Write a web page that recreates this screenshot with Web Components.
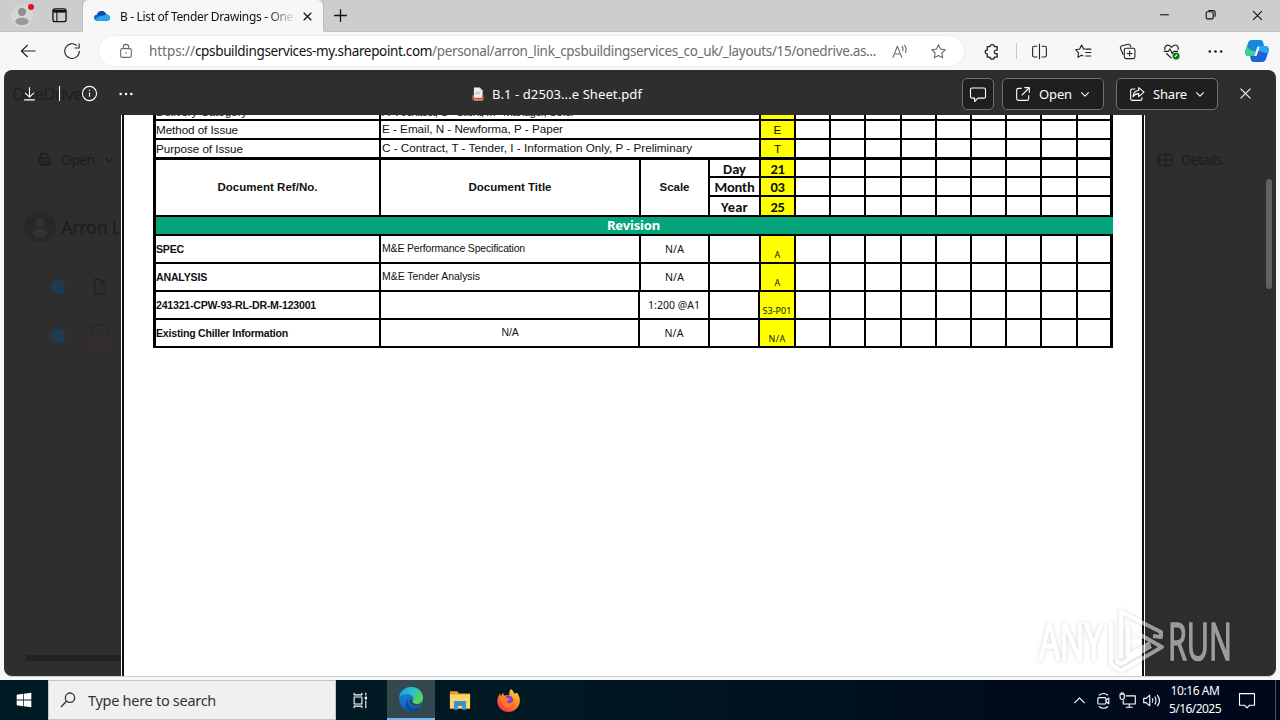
<!DOCTYPE html>
<html lang="en">
<head>
<meta charset="utf-8">
<title>B - List of Tender Drawings - OneDrive</title>
<style>
  body { margin: 0; width: 1280px; height: 720px; overflow: hidden; font-family: "Noto Sans", "Open Sans", sans-serif; }
</style>
</head>
<body>
<desktop-screen>
  <tab-strip></tab-strip>
  <address-bar></address-bar>
  <pdf-viewer><issue-sheet></issue-sheet></pdf-viewer>
  <task-bar></task-bar>
</desktop-screen>

<script>
// single line label, letter-spacing is adjusted so the text takes `w` pixels
class FitText extends HTMLElement {
  connectedCallback() {
    const w = parseFloat(this.getAttribute('w'));
    this.attachShadow({ mode: 'open' });
    this.shadowRoot.innerHTML = `
      <style>
        :host { display: block; flex: none; white-space: nowrap; }
        span { display: inline-block; vertical-align: top; }
      </style>
      <span><slot></slot></span>
    `;
    const span = this.shadowRoot.querySelector('span');
    const n = this.textContent.length;
    const natural = span.getBoundingClientRect().width;
    if (w && natural) {
      span.style.letterSpacing = ((w - natural) / n) + 'px';
      this.style.width = w + 'px';
    }
  }
}

const ICONS = {
  person: '<circle cx="12" cy="7" r="5" fill="#8f8f8f" stroke="none"/><ellipse cx="12" cy="18.5" rx="8" ry="4.5" fill="#999" stroke="none"/>',
  workspaces: '<rect x="4.5" y="4.5" width="15" height="14.500" rx="2.500" stroke-width="1.5"/><path d="M5 7.200H19" stroke-width="3"/><path d="M9 8V19"/>',
  onedrive: '<path d="M5 19C2 19 0 16.800 0 14.300S2 10 4.500 9.800C6 6 8.500 4.500 11.500 4.500c3.200 0 5.800 2 6.600 5C21.500 9.500 24 11.800 24 14.500S22 19 19.500 19z" fill="#0a66c2" stroke="none"/><path d="M4 18.800c-1.500-2 0-5 3-5.500L18 9.500c3.500 0 6 2.300 6 5S22 19 19.500 19z" fill="#28a8ea" stroke="none"/><path d="M4.500 9.800C6 6 8.500 4.500 11.500 4.500c3.200 0 5.800 2 6.600 5L12 12z" fill="#0b4fa3" stroke="none"/>',
  close: '<path d="M5 5l14 14M19 5L5 19"/>',
  plus: '<path d="M12 3v18M3 12h18"/>',
  minus: '<path d="M4 12.500h16"/>',
  restore: '<rect x="4" y="7" width="13" height="13" rx="2.500"/><path d="M8 4.500h8.500a4 4 0 0 1 4 4V16"/>',
  back: '<path d="M22 12H3M11.500 4L3.200 12l8.300 8"/>',
  reload: '<path d="M18.500 4.800A9.800 9.800 0 1 0 21.800 12M21.500 2v6h-6"/>',
  lock: '<rect x="4" y="8.500" width="16" height="13" rx="2.500"/><path d="M8 8.500V6a4 4 0 0 1 8 0v2.500"/><circle cx="12" cy="15" r="1.200" fill="currentColor" stroke="none"/>',
  readaloud: '<path d="M2.500 21L9 4.500 15.500 21M5 15.500h8M15 4.500c2 1.500 2.500 4 1.500 7M18.500 2.500c3 3 3.500 7.500 1.500 11.500"/>',
  star: '<path d="M12 2.500l2.900 6.100 6.600.9-4.800 4.600 1.200 6.700L12 17.600l-5.900 3.200 1.200-6.700L2.500 9.500l6.600-.9z"/>',
  puzzle: '<path d="M6 5h4a3 2.800 0 0 1 6 0h4v5h-1.500a2.600 2.600 0 0 0 0 5.200H20V20h-4a3 2.800 0 0 1-6 0H6v-4.500a2.800 2.800 0 1 1 0-5.600z"/>',
  split: '<path d="M9 4.500H4.500A2.200 2.200 0 0 0 2.300 6.700V17.500a2.200 2.200 0 0 0 2.200 2.200H9M15 4.500h4.500a2.200 2.200 0 0 1 2.200 2.200V17.500a2.200 2.200 0 0 1-2.200 2.200H15M12 1v22"/>',
  favorites: '<path d="M15 8.700l-2.800-.4L9.300 2.800 6.600 8.500.8 9.500 5 13.800l-1 6.300 5.200-2.900 2.500 1.300M15.500 8.700H23M14.500 13.500H23M14.500 18.300H23"/>',
  collections: '<path d="M6 16.500L2 7.500a2.500 2.500 0 0 1 1.500-3.200L13 1.800a2.500 2.500 0 0 1 3 1.700L17 6"/><rect x="7.500" y="7.500" width="15" height="14.500" rx="2.500"/><path d="M15 10.800v8M11 14.800h8"/>',
  health: '<path d="M3 10C1 5 5.500 1.800 9 3.500l3 2.600 3-2.600c4-2 8 1.500 6 6.500M1 11.800h6.500l2.500-3.500 3 7 2-3.500h6M4.500 14.500L12 21.500"/><circle cx="18.500" cy="18.500" r="5" fill="#107c10" stroke="none"/><path d="M16.500 19.500l3.500-3" stroke="#fff"/>',
  more: '<g fill="currentColor" stroke="none"><circle cx="4" cy="12" r="1.900"/><circle cx="12" cy="12" r="1.900"/><circle cx="20" cy="12" r="1.900"/></g>',
  copilot: '<g stroke="none"><path d="M7 1h8.500c1.500 0 2.300 1.200 2.700 2.500L19 7h-4c-2 0-2.800 1.300-3.300 3L9.500 17H4c-3.500 0-4.300-2.500-3.500-5.500L3 4C3.700 2 5 1 7 1z" fill="#1687d9"/><path d="M2 7l-1.500 5c-.8 3 0 5 3.500 5h5.500L11 12c-4 0-7-1-9-5z" fill="#3fcf8e"/><path d="M17 23H8.500c-1.500 0-2.200-1-2.700-2.500L5 17h4c2 0 2.700-1.200 3.300-3L14.500 7H20c3.500 0 4.300 2.500 3.500 5.500L21 20c-.7 2-2 3-4 3z" fill="#1a63dc"/><path d="M14.500 7H20c3.500 0 4.300 2.500 3.500 5.500l-.6 2C20 14 16 12.500 13 12z" fill="#2aa6f2"/><path d="M12.500 8.500h2l-3 8.500h-2z" fill="#f7f7f7"/></g>',
  download: '<path d="M12 3v14M5.800 11l6.200 6.200 6.200-6.200M4.500 21h15"/>',
  info: '<circle cx="12" cy="12" r="10"/><path d="M12 10.500v6"/><circle cx="12" cy="7.500" r="1" fill="currentColor" stroke="none"/>',
  pdf: '<path d="M5 1h10l5 5v17H5z" fill="#f3f0ee" stroke="none"/><path d="M15 1v5h5" fill="#c9c5c3" stroke="none"/><path d="M2 14h3v4.500h14V14h3v8H2z" fill="#d2553c" stroke="none"/><path d="M7 9h9M7 12h9" stroke="#bbb"/>',
  pdfghost: '<path d="M4 13V1h11l5 5v7" stroke="#252525"/><path d="M1 14h22v8H1zM6 18h3M11 18h3M16 18h3"/>',
  comment: '<path d="M4 4h16a2 2 0 0 1 2 2v9.500a2 2 0 0 1-2 2h-8L7.500 22v-4.500H4a2 2 0 0 1-2-2V6a2 2 0 0 1 2-2z"/>',
  openext: '<path d="M10 3.500H5A2.500 2.500 0 0 0 2.500 6v13A2.500 2.500 0 0 0 5 21.500h13a2.500 2.500 0 0 0 2.500-2.500v-5M14 2.500h7.500V10M21 3L10 14"/>',
  share: '<path d="M9.500 4.500H5A2.500 2.500 0 0 0 2.500 7v12A2.500 2.500 0 0 0 5 21.500h12a2.500 2.500 0 0 0 2.500-2.500v-2M14.500 2.500v4.200C9 7 6.500 10.500 6 16c2-3 4.500-4.500 8.500-4.500V16L22.500 9.200z"/>',
  chevron: '<path d="M3 8l9 9 9-9"/>',
  chevronup: '<path d="M2.500 17L12 7l9.500 10"/>',
  printer: '<path d="M6 10V3h9l3 3v4M3 10h18v9H3zM6 15h12v6H6z" stroke-width="2"/>',
  panel: '<rect x="2" y="4" width="20" height="16" rx="2"/><path d="M13 4v16M2 12h20"/>',
  check: '<circle cx="12" cy="12" r="11" fill="#1b3c56" stroke="none"/><path d="M6.500 12.500l3.500 3.500 7.500-8" stroke="#343434" stroke-width="3"/>',
  file: '<path d="M5 2h9l6 6v14H5zM14 2v6h6"/>',
  windows: '<path d="M1 4.200l9.500-1.400v8.600H1zM11.600 2.600L23 1v10.400H11.600zM1 12.600h9.500v8.600L1 19.800zM11.600 12.600H23V23l-11.400-1.600z" fill="#fff" stroke="none"/>',
  search: '<circle cx="15" cy="8.500" r="7"/><path d="M10 13.500L1.500 22.500"/>',
  taskview: '<path d="M3 1v3h11V1M3 23v-3h11v3M3 7h11v10H3zM19.500 1v4M19.500 12v11"/><rect x="18" y="6.500" width="3.200" height="4" fill="currentColor" stroke="none"/>',
  edge: '<defs><linearGradient id="e1" x1="0" y1="0" x2="1" y2=".6"><stop offset="0" stop-color="#2194d8"/><stop offset=".5" stop-color="#2cc0cf"/><stop offset="1" stop-color="#5fd64a"/></linearGradient><linearGradient id="e2" x1="0" y1="0" x2="0" y2="1"><stop offset="0" stop-color="#1b8ede"/><stop offset="1" stop-color="#0f5cb6"/></linearGradient></defs><g stroke="none"><circle cx="12" cy="12" r="12" fill="url(#e2)"/><path d="M.3 9.800C1.500 4 6 0 12 0c7 0 12 5 12 10.500 0 4-3 6.500-6.500 6.500-2.800 0-4.300-1-4.300-2 0-.6 1.300-1.300 1.300-3.300C14.500 9 11.500 7 7.800 7 4 7 1.500 8.500.3 9.800z" fill="url(#e1)"/><path d="M9.500 11.500c-2.500 5 1.500 9.500 6.500 9.500 2.500 0 4.500-.8 5.500-1.500a12 12 0 0 1-9.500 4.500C7 23.500 5 17 9.500 11.500z" fill="#0a4a9c"/><path d="M10.500 12.500c-.8 4 3.500 7 7.500 6.500 2-.3 3.500-1 5-1.500l-1 2.500 2.500 0V16c-2 1.200-4.500 2-7 1.300-2.500-.5-5.500-2-4.300-4.300z" fill="#33484f"/></g>',
  explorer: '<g stroke="none"><path d="M1 2.500h8l2 2.500h12v4H1z" fill="#e5a01f"/><path d="M1 6h22v15.500H1z" fill="#fbd668"/><path d="M5.500 13h13v9.500h-4v-4h-5v4h-4z" fill="#3b8fd4"/></g>',
  firefox: '<defs><linearGradient id="f1" x1=".9" y1="0" x2=".2" y2="1"><stop offset="0" stop-color="#ffe43f"/><stop offset=".45" stop-color="#ff8a1e"/><stop offset="1" stop-color="#ff2850"/></linearGradient></defs><g stroke="none"><path d="M14.500 0c2 1 3 3 3.200 4.500C19.500 5 21 4 21 4c2 3 3 5.500 2.800 9C23.400 19.500 18 24 12 24S.3 19 .3 13C.3 9.500 2 6.500 3.300 4.500l.5 3L6.500 4l1 3c2-.5 4-.5 5.500-.2C12.500 4 13 1.500 14.500 0z" fill="url(#f1)"/><circle cx="12" cy="12" r="5" fill="#7a3ee0"/><path d="M4 9c2-2 5-1.500 7 .3 1 1 2.500.7 3 1-1 2-3 1.500-3.500 3 1 2.500 5 2 6-1 1 4-2 7-6 6.700C6.500 18.500 3.500 14 4 9z" fill="#ff7a2c"/></g>',
  meetnow: '<rect x="4" y="8" width="11.500" height="9" rx="1.500"/><path d="M15.500 11.500l4-3v8l-4-3M5.500 4.500c4-3 9-3 13 0M5.500 20.500c4 3 9 3 13 0"/>',
  network: '<path d="M9.500 5.500H23v11.500H6v-5.500M14.500 17v4M9.500 21.500h10"/><path d="M1.500 3h6v4.500c0 2-1.500 3-3 3s-3-1-3-3zM3.500 3V.5M5.500 3V.5"/>',
  speaker: '<path d="M1 9h3.500l5-4.500v15l-5-4.500H1zM13 9c1.500 2 1.500 4 0 6M16.500 6.500c2.500 3.500 2.500 7.500 0 11M20 4c4 5 4 11 0 16"/>',
  action: '<path d="M2 3.500h20v15.500h-6.500L12 22.500 8.500 19H2z"/>'
};

class UiIcon extends HTMLElement {
  connectedCallback() {
    const size = this.getAttribute('size') || 16;
    // keep strokes about one device pixel whatever the icon size
    const sw = (this.getAttribute('sw') || 1.1) * 24 / size;
    this.attachShadow({ mode: 'open' });
    this.shadowRoot.innerHTML = `
      <style>
        :host { display: block; flex: none; width: ${size}px; height: ${size}px; }
        svg { display: block; overflow: visible; }
      </style>
      <svg width="${size}" height="${size}" viewBox="0 0 24 24" fill="none" stroke="currentColor"
        stroke-width="${sw}" stroke-linejoin="round">${ICONS[this.getAttribute('name')]}</svg>
    `;
  }
}

class DesktopScreen extends HTMLElement {
  connectedCallback() {
    this.attachShadow({ mode: 'open' });
    this.shadowRoot.innerHTML = `
      <style>
        :host { display: flex; flex-direction: column; position: relative; width: 1280px; height: 720px; background: #f7f7f7; overflow: hidden; }
        any-mark { position: absolute; left: 1030px; top: 604px; }
      </style>
      <slot></slot>
      <any-mark></any-mark>
    `;
  }
}

class TabStrip extends HTMLElement {
  connectedCallback() {
    this.attachShadow({ mode: 'open' });
    this.shadowRoot.innerHTML = `
      <style>
        :host { display: flex; height: 32px; background: #cdcdcd; color: #111; font-size: 12px; box-sizing: border-box; }
        .left { width: 83px; display: flex; align-items: center; box-sizing: border-box; padding-left: 11px; gap: 16px; border-radius: 0 0 5px 0; border-right: 1px solid #bcbcbc; border-bottom: 1px solid #c0c0c0; }
        .avatar { position: relative; width: 22px; height: 22px; display: flex; align-items: center; justify-content: center; border-radius: 50%; background: #d6d6d6; }
        .dot { position: absolute; left: 17px; top: -1px; width: 6px; height: 6px; border-radius: 50%; background: #e81123; }
        .tab { width: 240px; display: flex; align-items: center; box-sizing: border-box; padding-left: 11px; background: #f7f7f7; border-radius: 6px 6px 0 0; }
        .title { margin-left: 10px; width: 173px; -webkit-mask-image: linear-gradient(90deg, #000 148px, transparent 176px); }
        .tab ui-icon:last-child { margin-left: 8px; }
        .rest { flex: 1; display: flex; align-items: center; justify-content: space-between; padding: 0 15px 0 8px; border-radius: 0 0 0 5px; border-left: 1px solid #bcbcbc; border-bottom: 1px solid #c0c0c0; }
        .win { display: flex; gap: 33px; }
      </style>
      <div class="left">
        <div class="avatar"><ui-icon name="person" size="20"></ui-icon><div class="dot"></div></div>
        <ui-icon name="workspaces" size="21"></ui-icon>
      </div>
      <div class="tab">
        <ui-icon name="onedrive" size="16"></ui-icon>
        <div class="title"><fit-text w="173">B - List of Tender Drawings - One</fit-text></div>
        <ui-icon name="close" size="13" sw="1.3"></ui-icon>
      </div>
      <div class="rest">
        <ui-icon name="plus" size="17" sw="1.3"></ui-icon>
        <div class="win">
          <ui-icon name="minus" size="13"></ui-icon>
          <ui-icon name="restore" size="13"></ui-icon>
          <ui-icon name="close" size="15"></ui-icon>
        </div>
      </div>
    `;
  }
}

class AddressBar extends HTMLElement {
  connectedCallback() {
    this.attachShadow({ mode: 'open' });
    this.shadowRoot.innerHTML = `
      <style>
        :host { display: flex; align-items: center; height: 38px; box-sizing: border-box; padding: 0 9px 0 19px; color: #222; background: #f7f7f7; font-size: 13.500px; }
        .nav { display: flex; gap: 26px; width: 80px; }
        .field { display: flex; align-items: center; width: 865px; height: 30px; box-sizing: border-box; padding: 0 17px 0 19px; border-radius: 15px; background: #fff; box-shadow: 0 0 2px #ddd; color: #6c6c6c; }
        .url { display: flex; margin-left: 15px; flex: 1; }
        .host { color: #111; }
        .field ui-icon + ui-icon, .url + ui-icon + ui-icon { margin-left: 22px; }
        .tools { flex: 1; display: flex; align-items: center; margin-left: 19px; }
        .tools ui-icon + ui-icon { margin-left: 27px; }
        .tools .sep { width: 1px; height: 16px; background: #c8c8c8; margin: 0 14px 0 16px; }
        .tools ui-icon.co { margin-left: 21px; }
      </style>
      <div class="nav">
        <ui-icon name="back" size="18"></ui-icon>
        <ui-icon name="reload" size="18"></ui-icon>
      </div>
      <div class="field">
        <ui-icon name="lock" size="16"></ui-icon>
        <div class="url">
          <fit-text w="46">https://</fit-text><fit-text class="host" w="237">cpsbuildingservices-my.sharepoint.com</fit-text><fit-text w="444">/personal/arron_link_cpsbuildingservices_co_uk/_layouts/15/onedrive.as...</fit-text>
        </div>
        <ui-icon name="readaloud" size="17"></ui-icon>
        <ui-icon name="star" size="17"></ui-icon>
      </div>
      <div class="tools">
        <ui-icon name="puzzle" size="17" sw="1.3"></ui-icon>
        <div class="sep"></div>
        <ui-icon name="split" size="17"></ui-icon>
        <ui-icon name="favorites" size="17"></ui-icon>
        <ui-icon name="collections" size="17"></ui-icon>
        <ui-icon name="health" size="17"></ui-icon>
        <ui-icon name="more" size="17"></ui-icon>
        <ui-icon class="co" name="copilot" size="24"></ui-icon>
      </div>
    `;
  }
}

class PdfViewer extends HTMLElement {
  connectedCallback() {
    this.attachShadow({ mode: 'open' });
    this.shadowRoot.innerHTML = `
      <style>
        :host { display: flex; flex-direction: column; position: relative; width: 1272px; height: 606px; margin: 0 4px 4px; background: #2e2e2e; border-radius: 8px; overflow: hidden; color: #fff; font-size: 13px; box-shadow: 0 1px 0 #ccc; flex: none; }
        .ghost { position: absolute; color: #1f1f1f; display: flex; align-items: center; }
        header { position: relative; display: flex; align-items: center; height: 45px; padding-top: 2px; box-sizing: border-box; }
        .left { width: 467px; display: flex; align-items: center; padding-left: 17px; box-sizing: border-box; }
        .bar { width: 1px; height: 15px; background: #fff; margin: 0 21px 0 21px; }
        .left ui-icon:last-child { margin-left: 20px; }
        .name { width: 491px; display: flex; align-items: center; gap: 7px; }
        .btn { display: flex; align-items: center; height: 32px; box-sizing: border-box; border: 1px solid #707070; border-radius: 5px; background: #1f1f1f; }
        .c { width: 32px; justify-content: center; }
        .open, .share { width: 102px; padding-left: 12px; }
        .open { margin-left: 8px; }
        .share { margin-left: 12px; }
        .btn fit-text { margin: 0 8px 0 8px; }
        .x { margin-left: 19px; }
        main { flex: 1; display: flex; position: relative; }
        .page { width: 1018px; margin-left: 118px; box-sizing: content-box; background: #fff; border: solid #111; border-width: 0 2px; box-shadow: -1px 0 #fff, 1px 0 #fff; }
        .thumb { position: absolute; left: 1262px; top: 109px; width: 6px; height: 110px; border-radius: 3px; background: #616161; }
        .scroll { position: absolute; left: 22px; top: 585px; width: 100px; height: 6px; background: #222; }
        .face { width: 32px; height: 32px; border-radius: 50%; background: #282828; display: flex; align-items: center; justify-content: center; }
      </style>
      <div class="ghost" style="left:8px;top:12px;font-size:17px"><fit-text w="70">OneDrive</fit-text></div>
      <div class="ghost" style="left:33px;top:80px;gap:9px;font-size:14px;color:#1d1d1d"><ui-icon name="printer" size="15"></ui-icon><fit-text w="34">Open</fit-text><ui-icon name="chevron" size="10" sw="1.4"></ui-icon></div>
      <div class="ghost" style="left:20px;top:141px;gap:5px;font-size:18px;color:#1c1c1c"><span class="face"><ui-icon name="person" size="22" style="opacity:.1"></ui-icon></span><fit-text w="60">Arron L</fit-text></div>
      <div class="ghost" style="left:46px;top:208px;gap:25px"><ui-icon name="check" size="16"></ui-icon><ui-icon name="file" size="17"></ui-icon></div>
      <div class="ghost" style="left:46px;top:254px;gap:22px;color:#452828"><ui-icon name="check" size="16"></ui-icon><ui-icon name="pdfghost" size="24"></ui-icon></div>
      <div class="ghost" style="left:1153px;top:80px;gap:8px;font-size:14px;color:#1d1d1d"><ui-icon name="panel" size="16"></ui-icon><fit-text w="41">Details</fit-text></div>
      <div class="scroll"></div>
      <header>
        <div class="left">
          <ui-icon name="download" size="17"></ui-icon>
          <div class="bar"></div>
          <ui-icon name="info" size="17"></ui-icon>
          <ui-icon name="more" size="16"></ui-icon>
        </div>
        <div class="name"><ui-icon name="pdf" size="14"></ui-icon><fit-text w="150">B.1 - d2503...e Sheet.pdf</fit-text></div>
        <div class="btn c"><ui-icon name="comment" size="18"></ui-icon></div>
        <div class="btn open"><ui-icon name="openext" size="16"></ui-icon><fit-text w="33">Open</fit-text><ui-icon name="chevron" size="10"></ui-icon></div>
        <div class="btn share"><ui-icon name="share" size="16"></ui-icon><fit-text w="34">Share</fit-text><ui-icon name="chevron" size="10"></ui-icon></div>
        <ui-icon class="x" name="close" size="17"></ui-icon>
      </header>
      <main><div class="page"><slot></slot></div></main>
      <div class="thumb"></div>
    `;
  }
}

class IssueSheet extends HTMLElement {
  connectedCallback() {
    const blanks = n => '<i></i>'.repeat(n);
    const t = (w, s) => `<fit-text w="${w}">${s}</fit-text>`;
    const rows = [
      ['<i class="b">' + t(28, 'SPEC') + '</i>', '<i class="s">' + t(143, 'M&amp;E Performance Specification') + '</i>', t(19, 'N/A'), t(6, 'A')],
      ['<i class="b">' + t(51, 'ANALYSIS') + '</i>', '<i class="s">' + t(98, 'M&amp;E Tender Analysis') + '</i>', t(19, 'N/A'), t(6, 'A')],
      ['<i class="b">' + t(160, '241321-CPW-93-RL-DR-M-123001') + '</i>', '<i class="cut"></i>', t(52, '1:200 @A1'), t(29, 'S3-P01')],
      ['<i class="b">' + t(132, 'Existing Chiller Information') + '</i>', '<i class="s mid cut">' + t(17, 'N/A') + '</i>', t(19, 'N/A'), t(17, 'N/A')]
    ];
    this.attachShadow({ mode: 'open' });
    this.shadowRoot.innerHTML = `
      <style>
        :host { display: block; margin-left: 29px; width: 960px; color: #111; }
        .grid { display: grid; gap: 2px; background: #000; padding: 0 3px 2px; font-family: "Liberation Sans", Arial, sans-serif; font-size: 11.700px;
          grid-template-columns: 223px 258px 67px 49px 33px 33px 33px 34px 33px 33px 33px 33px 34px 32px;
          grid-template-rows: 4px 17px 17px 17px 17px 18px 17px 26px 26px 26px 26px; }
        i { font-style: normal; background: #fff; display: flex; align-items: center; justify-content: flex-start; line-height: 14px; overflow: hidden; padding-top: 1px; box-sizing: border-box; }
        .wide { grid-column: 2 / 5; padding: 0 0 1px 1px; }
        .y { background: #ff0; justify-content: center; }
        .h { grid-row: 4 / 7; justify-content: center; font-weight: bold; font-size: 11.500px; padding: 0 0 1px; }
        .top { border-top: 1px solid #000; }
        .d { justify-content: center; font: bold 14.500px/16px Carlito, "Noto Sans", sans-serif; padding: 1px 0 0; }
        .rev { grid-column: 1 / -1; margin-right: -3px; background: #04a57a; color: #fff; justify-content: center; font: bold 13px/16px "Noto Sans", sans-serif; padding: 0 2px 2px 0; }
        .b { font-weight: bold; font-size: 10.600px; padding: 0; }
        .s { font-size: 10.500px; padding: 0 0 2px 1px; }
        .mid { justify-content: center; }
        .cut { border-right: 1px solid #000; }
        .n { justify-content: center; font: 10.500px/14px "Noto Sans", sans-serif; padding: 0; }
        .a { align-items: flex-end; font: 9px/12px "Noto Sans", sans-serif; padding-bottom: 1px; }
        .shift { margin-left: -1px; }
        .clip { align-items: flex-end; padding-top: 0; padding-bottom: 1px; line-height: 12px; }
      </style>
      <div class="grid">
        <i class="clip">${t(91, 'Delivery Category')}</i><i class="wide clip">${t(192, 'A - Architect, C - Client, M - Manager, Other')}</i><i class="y"></i>${blanks(9)}
        <i>${t(82, 'Method of Issue')}</i><i class="wide">${t(181, 'E - Email, N - Newforma, P - Paper')}</i><i class="y">E</i>${blanks(9)}
        <i>${t(87, 'Purpose of Issue')}</i><i class="wide">${t(310, 'C - Contract, T - Tender, I - Information Only, P - Preliminary')}</i><i class="y">T</i>${blanks(9)}
        <i class="h top">${t(100, 'Document Ref/No.')}</i><i class="h top">${t(83, 'Document Title')}</i><i class="h top">${t(30, 'Scale')}</i>
        <i class="d top">${t(23, 'Day')}</i><i class="d y top">${t(14, '21')}</i>${'<i class="top"></i>'.repeat(9)}
        <i class="d">${t(40, 'Month')}</i><i class="d y">${t(14, '03')}</i>${blanks(9)}
        <i class="d">${t(27, 'Year')}</i><i class="d y">${t(14, '25')}</i>${blanks(9)}
        <i class="rev">${t(53, 'Revision')}</i>
        ${rows.map(([ref, title, scale, rev], k) => `${ref}${title}<i class="n${k > 1 ? ' shift' : ''}">${scale}</i>
          <i${k > 1 ? ' class="cut"' : ''}></i><i class="y a${k > 1 ? ' shift' : ''}">${rev}</i>${blanks(9)}`).join('')}
      </div>
    `;
  }
}

// translucent logo that lies over the lower right corner
class AnyMark extends HTMLElement {
  connectedCallback() {
    this.attachShadow({ mode: 'open' });
    this.shadowRoot.innerHTML = `
      <style>
        :host { display: block; width: 210px; height: 74px; }
        svg { display: block; overflow: visible; filter: drop-shadow(0 0 2px rgba(0,0,0,.3)); }
        text { font: 51px "Open Sans", "Noto Sans", sans-serif; fill: #fff; stroke: #fff; stroke-width: 1.6; }
      </style>
      <svg width="210" height="74" viewBox="0 0 210 74" opacity=".52">
        <text x="9" y="55.500" textLength="64" lengthAdjust="spacingAndGlyphs">ANY</text>
        <text x="138" y="55.500" textLength="64" lengthAdjust="spacingAndGlyphs">RUN</text>
        <g fill="none" stroke="#fff" stroke-width="4" stroke-linejoin="round">
          <path d="M91 54V8l40 20v5l-8-1M81 18v42M81 60l10 7 41-24-25-14M86 57l5 3 30-18M98 22v30l22-13"/>
        </g>
      </svg>
    `;
  }
}

class TaskBar extends HTMLElement {
  connectedCallback() {
    this.attachShadow({ mode: 'open' });
    this.shadowRoot.innerHTML = `
      <style>
        :host { display: flex; height: 40px; background: linear-gradient(90deg, #001a23 0, #001822 45%, #000d1e 75%, #00081a); color: #fff; font-size: 12px; flex: none; }
        .cell { width: 48px; display: flex; align-items: center; justify-content: center; }
        .search { width: 288px; box-sizing: border-box; display: flex; align-items: center; gap: 12px; padding-left: 11px; background: #f0f0f0; border: 1px solid #c6c6c6; color: #333; font-size: 14.500px; }
        .gap { width: 3px; }
        .on { background: #33484f; border-bottom: 2px solid #76b9ed; box-sizing: border-box; margin-right: 1px; }
        .tray { margin-left: auto; display: flex; align-items: center; }
        .clock { width: 64px; margin-left: -4px; display: flex; flex-direction: column; align-items: center; line-height: 18px; padding-bottom: 1px; }
        .tray ui-icon { margin-right: 7px; }
        .tray ui-icon:first-child { margin-right: 9px; }
        .tray .action { margin: 0 19px 0 11px; }
        .edge { width: 1px; height: 40px; background: #4b5360; margin-right: 4px; }
      </style>
      <div class="cell"><ui-icon name="windows" size="16"></ui-icon></div>
      <div class="search"><ui-icon name="search" size="16" sw="1.3"></ui-icon><fit-text w="128">Type here to search</fit-text></div>
      <div class="cell"><ui-icon name="taskview" size="17"></ui-icon></div>
      <div class="gap"></div>
      <div class="cell on"><ui-icon name="edge" size="24"></ui-icon></div>
      <div class="cell"><ui-icon name="explorer" size="22"></ui-icon></div>
      <div class="cell"><ui-icon name="firefox" size="23"></ui-icon></div>
      <div class="tray">
        <ui-icon name="chevronup" size="13"></ui-icon>
        <ui-icon name="meetnow" size="17"></ui-icon>
        <ui-icon name="network" size="17"></ui-icon>
        <ui-icon name="speaker" size="17"></ui-icon>
        <div class="clock"><fit-text w="49">10:16 AM</fit-text><fit-text w="52">5/16/2025</fit-text></div>
        <ui-icon class="action" name="action" size="18"></ui-icon>
        <div class="edge"></div>
      </div>
    `;
  }
}

customElements.define('fit-text', FitText);
customElements.define('ui-icon', UiIcon);
customElements.define('any-mark', AnyMark);
customElements.define('desktop-screen', DesktopScreen);
customElements.define('tab-strip', TabStrip);
customElements.define('address-bar', AddressBar);
customElements.define('issue-sheet', IssueSheet);
customElements.define('pdf-viewer', PdfViewer);
customElements.define('task-bar', TaskBar);
</script>
</body>
</html>
